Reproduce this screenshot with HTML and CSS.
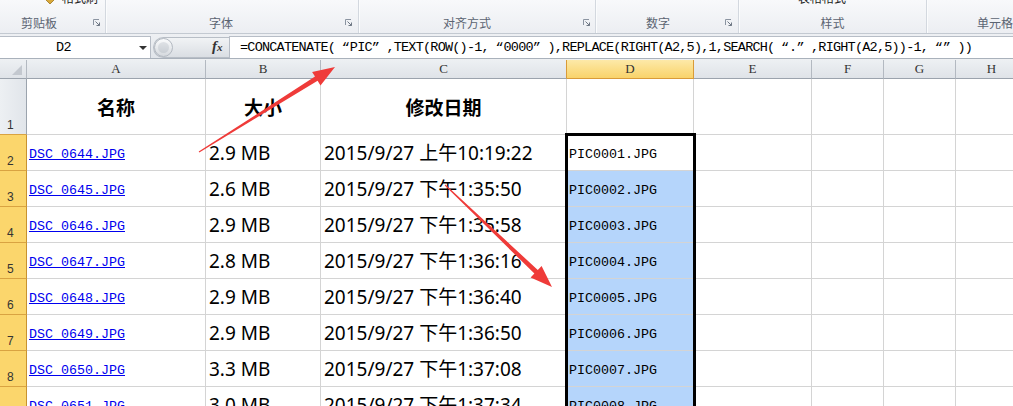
FILE: index.html
```html
<!DOCTYPE html>
<html>
<head>
<meta charset="utf-8">
<link rel="stylesheet" href="styles.css">
</head>
<body>
<div class="app">
  <div class="ribbon">
    <div class="grp g1">
      <div class="gtop"><svg class="brush" width="12" height="6" viewBox="0 0 12 6"><polygon points="1,0 11,0 6,5" fill="#d9a93a" stroke="#9c7420" stroke-width="0.8"/></svg><span class="cut">格式刷</span></div>
      <div class="glab"><span class="tx">剪贴板</span><svg class="lau" width="7" height="7" viewBox="0 0 7 7"><path d="M0.5 6V0.5H6" fill="none" stroke="#8b94a1"/><path d="M2.5 2.5L6.5 6.5M6.5 3.5V6.5H3.5" fill="none" stroke="#6f7885"/></svg></div>
    </div>
    <div class="grp g2">
      <div class="gtop"></div>
      <div class="glab"><span class="tx">字体</span><svg class="lau" width="7" height="7" viewBox="0 0 7 7"><path d="M0.5 6V0.5H6" fill="none" stroke="#8b94a1"/><path d="M2.5 2.5L6.5 6.5M6.5 3.5V6.5H3.5" fill="none" stroke="#6f7885"/></svg></div>
    </div>
    <div class="grp g3">
      <div class="gtop"></div>
      <div class="glab"><span class="tx">对齐方式</span><svg class="lau" width="7" height="7" viewBox="0 0 7 7"><path d="M0.5 6V0.5H6" fill="none" stroke="#8b94a1"/><path d="M2.5 2.5L6.5 6.5M6.5 3.5V6.5H3.5" fill="none" stroke="#6f7885"/></svg></div>
    </div>
    <div class="grp g4">
      <div class="gtop"></div>
      <div class="glab"><span class="tx">数字</span><svg class="lau" width="7" height="7" viewBox="0 0 7 7"><path d="M0.5 6V0.5H6" fill="none" stroke="#8b94a1"/><path d="M2.5 2.5L6.5 6.5M6.5 3.5V6.5H3.5" fill="none" stroke="#6f7885"/></svg></div>
    </div>
    <div class="grp g5">
      <div class="gtop"><span class="cut cut5">表格格式</span></div>
      <div class="glab"><span class="tx">样式</span></div>
    </div>
    <div class="grp g6">
      <div class="gtop"></div>
      <div class="glab"><span class="tx tx6">单元格</span></div>
    </div>
  </div>

  <div class="fbar">
    <div class="nbox"><span class="nm">D2</span><span class="dd"></span></div>
    <div class="mid">
      <div class="pill"><span class="knob"><span class="knob-in"></span></span></div>
      <span class="fx">f<span class="fxx">x</span></span>
    </div>
    <div class="fml">=CONCATENATE(<span class="q ql">“</span>PIC<span class="q qr">”</span>,TEXT(ROW()-1,<span class="q ql">“</span>0000<span class="q qr">”</span>),REPLACE(RIGHT(A2,5),1,SEARCH(<span class="q ql">“</span>.<span class="q qr">”</span>,RIGHT(A2,5))-1,<span class="q ql">“</span><span class="q qr">”</span>))</div>
  </div>
  <div class="gap"></div>

  <div class="sheet">
    <div class="grid">
      <div class="c ch cn"><svg width="10" height="10" viewBox="0 0 10 10"><polygon points="10,0 10,10 0,10" fill="#c3c8cf"/></svg></div>
      <div class="c ch">A</div>
      <div class="c ch">B</div>
      <div class="c ch pre">C</div>
      <div class="c ch on">D</div>
      <div class="c ch">E</div>
      <div class="c ch">F</div>
      <div class="c ch">G</div>
      <div class="c ch">H</div>

      <div class="c rh r1">1</div>
      <div class="c t1">名称</div>
      <div class="c t1">大小</div>
      <div class="c t1">修改日期</div>
      <div class="c"></div>
      <div class="c"></div>
      <div class="c"></div>
      <div class="c"></div>
      <div class="c"></div>

      <div class="c rh on">2</div>
      <div class="c lk"><span>DSC_0644.JPG</span></div>
      <div class="c num">2.9 MB</div>
      <div class="c num">2015/9/27 上午10:19:22</div>
      <div class="c pc">PIC0001.JPG</div>
      <div class="c"></div>
      <div class="c"></div>
      <div class="c"></div>
      <div class="c"></div>

      <div class="c rh on">3</div>
      <div class="c lk"><span>DSC_0645.JPG</span></div>
      <div class="c num">2.6 MB</div>
      <div class="c num">2015/9/27 下午1:35:50</div>
      <div class="c pc bl">PIC0002.JPG</div>
      <div class="c"></div>
      <div class="c"></div>
      <div class="c"></div>
      <div class="c"></div>

      <div class="c rh on">4</div>
      <div class="c lk"><span>DSC_0646.JPG</span></div>
      <div class="c num">2.9 MB</div>
      <div class="c num">2015/9/27 下午1:35:58</div>
      <div class="c pc bl">PIC0003.JPG</div>
      <div class="c"></div>
      <div class="c"></div>
      <div class="c"></div>
      <div class="c"></div>

      <div class="c rh on">5</div>
      <div class="c lk"><span>DSC_0647.JPG</span></div>
      <div class="c num">2.8 MB</div>
      <div class="c num">2015/9/27 下午1:36:16</div>
      <div class="c pc bl">PIC0004.JPG</div>
      <div class="c"></div>
      <div class="c"></div>
      <div class="c"></div>
      <div class="c"></div>

      <div class="c rh on">6</div>
      <div class="c lk"><span>DSC_0648.JPG</span></div>
      <div class="c num">2.9 MB</div>
      <div class="c num">2015/9/27 下午1:36:40</div>
      <div class="c pc bl">PIC0005.JPG</div>
      <div class="c"></div>
      <div class="c"></div>
      <div class="c"></div>
      <div class="c"></div>

      <div class="c rh on">7</div>
      <div class="c lk"><span>DSC_0649.JPG</span></div>
      <div class="c num">2.9 MB</div>
      <div class="c num">2015/9/27 下午1:36:50</div>
      <div class="c pc bl">PIC0006.JPG</div>
      <div class="c"></div>
      <div class="c"></div>
      <div class="c"></div>
      <div class="c"></div>

      <div class="c rh on">8</div>
      <div class="c lk"><span>DSC_0650.JPG</span></div>
      <div class="c num">3.3 MB</div>
      <div class="c num">2015/9/27 下午1:37:08</div>
      <div class="c pc bl">PIC0007.JPG</div>
      <div class="c"></div>
      <div class="c"></div>
      <div class="c"></div>
      <div class="c"></div>

      <div class="c rh on">9</div>
      <div class="c lk"><span>DSC_0651.JPG</span></div>
      <div class="c num">3.0 MB</div>
      <div class="c num">2015/9/27 下午1:37:34</div>
      <div class="c pc bl">PIC0008.JPG</div>
      <div class="c"></div>
      <div class="c"></div>
      <div class="c"></div>
      <div class="c"></div>
    </div>
    <div class="sel"></div>
  </div>

  <svg class="arrows" width="1013" height="406" viewBox="0 0 1013 406">
    <polygon fill="#ef3b39" points="198.7,151.6 315.0,76.6 312.1,71.9 335,67 320.5,85.5 317.6,80.8 199.3,152.4"/>
    <polygon fill="#ef3b39" points="444.7,185.4 534.4,273.6 530.6,277.6 552,287 541.6,266.0 537.8,270.0 445.4,184.6"/>
  </svg>
</div>
</body>
</html>
```

FILE: styles.css
```css
html, body {
  margin: 0;
  padding: 0;
  background: #fff;
  overflow: hidden;
}

.app {
  position: relative;
  width: 1013px;
  height: 406px;
  overflow: hidden;
  font-family: "Noto Sans", "Noto Sans CJK SC", sans-serif;
}

/* ---------- ribbon ---------- */
.ribbon {
  display: flex;
  height: 34px;
  box-sizing: border-box;
  background: linear-gradient(#f8f9fb, #eceef2);
  border-bottom: 1px solid #c3c9d1;
  overflow: hidden;
}

.grp {
  flex: none;
  display: flex;
  flex-direction: column;
  box-sizing: border-box;
  border-right: 1px solid #d3d8df;
  box-shadow: 1px 0 0 #fbfcfd;
}

.g1 { width: 106px; }
.g2 { width: 253px; }
.g3 { width: 237px; }
.g4 { width: 143px; }
.g5 { width: 188px; }
.g6 { flex: 1; border-right: none; box-shadow: none; }

.gtop {
  height: 12px;
  overflow: hidden;
  display: flex;
  align-items: flex-start;
}

.brush {
  margin-left: 44px;
  margin-top: -1px;
}

.cut {
  margin-left: 6px;
  margin-top: -9px;
  font: 12px/14px "Noto Sans CJK SC", sans-serif;
  color: #222;
}

.cut5 {
  margin-left: 59px;
}

.glab {
  height: 21px;
  display: flex;
  align-items: center;
  font: 12px/14px "Noto Sans CJK SC", sans-serif;
  color: #5b6472;
}

.glab .tx {
  flex: 1;
  text-align: center;
}

.glab .tx6 {
  text-align: left;
  padding-left: 50px;
}

.lau {
  flex: none;
  margin-right: 6px;
}

.g1 .tx { flex: none; width: 78px; }
.g1 .lau { margin-left: 15px; }
.g2 .tx { flex: none; width: 230px; }
.g2 .lau { margin-left: 9px; }
.g3 .tx { flex: none; width: 216px; }
.g3 .lau { margin-left: 8px; }
.g4 .tx { flex: none; width: 124px; }
.g4 .lau { margin-left: 5px; }

/* ---------- formula bar ---------- */
.fbar {
  display: flex;
  height: 25px;
  box-sizing: border-box;
  padding-top: 2px;
  background: linear-gradient(#eef0f3, #e1e5ea);
  border-bottom: 1px solid #a9b1bb;
}

.nbox {
  flex: none;
  width: 151px;
  box-sizing: border-box;
  display: flex;
  align-items: center;
  background: #fff;
  border-top: 1px solid #b7bdc6;
  border-right: 1px solid #b7bdc6;
}

.nm {
  width: 127px;
  text-align: center;
  font: 13.5px "Liberation Mono", monospace;
  letter-spacing: -0.5px;
  color: #000;
}

.dd {
  margin-left: 12px;
  width: 0;
  height: 0;
  border-left: 4px solid transparent;
  border-right: 4px solid transparent;
  border-top: 4px solid #333;
}

.mid {
  flex: none;
  width: 78px;
  display: flex;
  align-items: center;
  position: relative;
}

.pill {
  margin-left: 2px;
  width: 76px;
  height: 21px;
  box-sizing: border-box;
  border-radius: 11px 0 0 11px;
  background: linear-gradient(#f1f3f5, #dadee3);
  border: 1px solid #b8bec6;
  border-right: none;
  display: flex;
  align-items: center;
}

.knob {
  width: 19px;
  height: 19px;
  border-radius: 50%;
  box-sizing: border-box;
  border: 1px solid #b3b9c1;
  background: linear-gradient(#fafbfc, #d5d9de);
  display: flex;
  align-items: center;
  justify-content: center;
}

.knob-in {
  width: 11px;
  height: 11px;
  border-radius: 50%;
  background: linear-gradient(#dfe2e6, #c9ced4);
}

.fx {
  position: absolute;
  left: 61px;
  top: 2px;
  font: italic bold 15px "Liberation Serif", serif;
  color: #333;
}

.fxx {
  font-size: 11px;
}

.fml {
  flex: 1;
  box-sizing: border-box;
  display: flex;
  align-items: center;
  padding-left: 10px;
  background: #fff;
  border-top: 1px solid #b7bdc6;
  border-left: 1px solid #b7bdc6;
  white-space: nowrap;
  font: 13.5px "Liberation Mono", monospace;
  letter-spacing: -0.78px;
  color: #000;
}

.q {
  display: inline-block;
  width: 14.64px;
  letter-spacing: 0;
}

.ql { text-align: right; }
.qr { text-align: left; }

.gap {
  height: 1px;
  background: #eef0f2;
}

/* ---------- sheet ---------- */
.sheet {
  position: relative;
}

.grid {
  display: grid;
  width: 1028px;
  grid-template-columns: 27px 179px 115px 246px 127px 118px 72px 72px 72px;
  grid-template-rows: 19px 56px repeat(8, 36px);
}

.c {
  box-sizing: border-box;
  border-right: 1px solid #d4d4d4;
  border-bottom: 1px solid #d4d4d4;
  display: flex;
  align-items: center;
  padding-left: 2px;
  white-space: nowrap;
  overflow: hidden;
  background: #fff;
}

.ch {
  justify-content: center;
  padding: 0;
  background: linear-gradient(#edf0f3, #dfe3e8);
  border-right-color: #b3b9c1;
  border-bottom-color: #9ba3ad;
  font: 13px "Liberation Serif", serif;
  color: #333;
}

.ch.pre {
  border-right-color: #d99b38;
}

.ch.on {
  background: linear-gradient(#fde9a8, #f9d36a);
  border-right-color: #d99b38;
  border-bottom-color: #d99b38;
}

.cn {
  justify-content: flex-end;
  align-items: flex-end;
  padding: 0 4px 3px 0;
}

.rh {
  align-items: flex-end;
  padding: 0 0 2px 7px;
  background: linear-gradient(90deg, #edf0f3, #e1e5ea);
  border-right-color: #9ba3ad;
  border-bottom-color: #c5cad1;
  font: 12px "Liberation Sans", sans-serif;
  color: #333;
}

.rh.r1 {
  border-bottom-color: #d9a341;
}

.rh.on {
  background: #fbd66c;
  border-right-color: #c8922f;
  border-bottom-color: #d9a341;
}

.t1 {
  justify-content: center;
  padding: 0;
  font: bold 19px/22px "Noto Sans CJK SC", sans-serif;
  color: #000;
}

.lk {
  padding-top: 3px;
  font: 13.33px "Liberation Mono", monospace;
  color: #0000ee;
}

.lk span {
  text-decoration: underline;
}

.num {
  padding-left: 3px;
  font: 19px/20px "Noto Sans", "Noto Sans CJK SC", sans-serif;
  color: #000;
}

.pc {
  padding-top: 3px;
  font: 13.33px "Liberation Mono", monospace;
  color: #000;
}

.bl {
  background: #b5d5fb;
}

.sel {
  position: absolute;
  left: 565px;
  top: 73px;
  width: 131px;
  height: 400px;
  box-sizing: border-box;
  border: 3px solid #000;
  pointer-events: none;
}

.arrows {
  position: absolute;
  left: 0;
  top: 0;
  pointer-events: none;
}
```
